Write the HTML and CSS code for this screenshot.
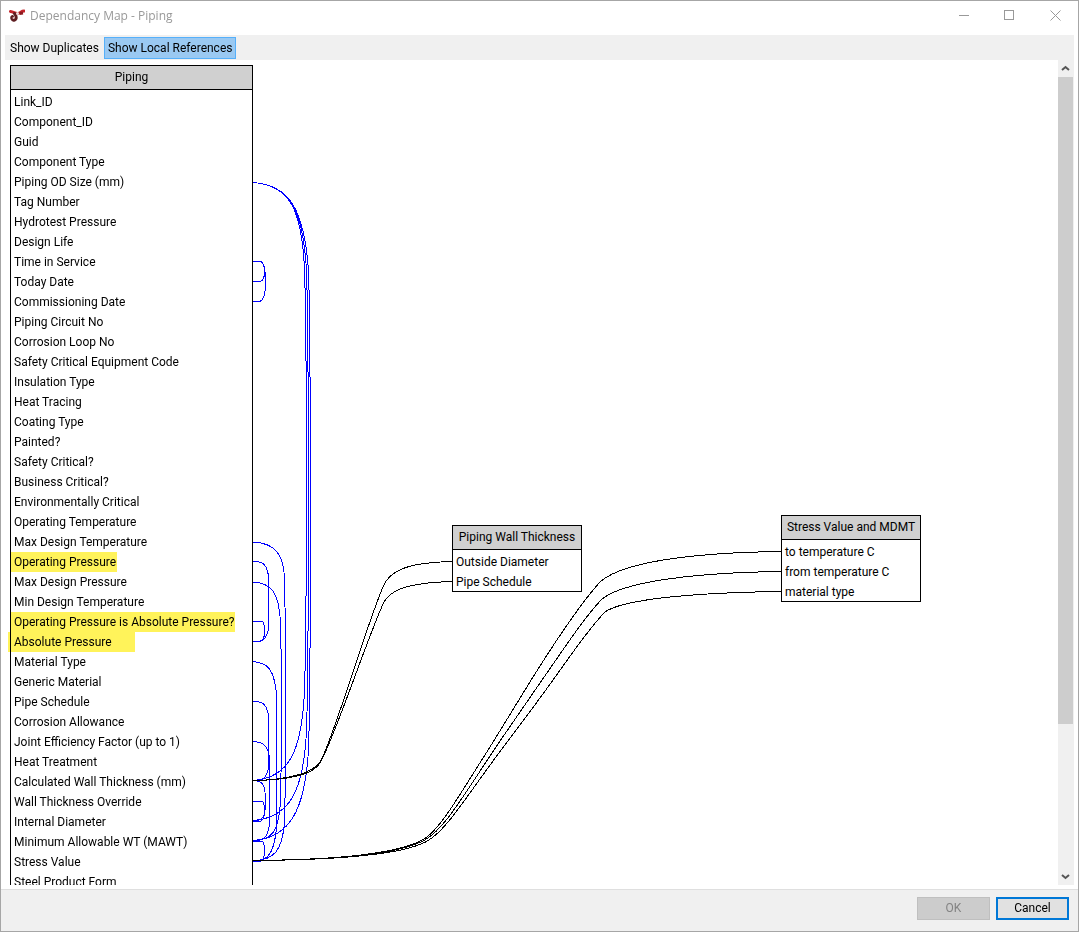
FILE: index.html
```
<!DOCTYPE html>
<html lang="en">
  <head>
    <meta charset="UTF-8" />
    <title>Dependancy Map - Piping</title>
    <link rel="stylesheet" href="styles.css">
  </head>

  <body>
    <div class="window">
      <header class="titlebar">
        <svg class="logo" width="16" height="14" viewBox="0 0 16 14">
          <path d="M1.500 2.500C5 3 6 5 9 4.500S12 2 15 2" fill="none" stroke="#c4242b" stroke-width="3" stroke-linecap="round" />
          <path d="M10.500 4.500L14 4" fill="none" stroke="#8d1a20" stroke-width="3" />
          <path d="M5.500 4.500C7.500 7 8 10 5.500 11S2 8.500 3.500 7.500" fill="none" stroke="#5e1d21" stroke-width="3" stroke-linecap="round" />
          <circle cx="8.500" cy="4.500" r="1.500" fill="#f0dada" />
          <circle cx="4.500" cy="9" r="1" fill="#e0b4b6" />
        </svg>
        <h1>Dependancy Map - Piping</h1>
        <div class="controls">
          <button type="button" aria-label="Minimize">
            <svg width="11" height="11" viewBox="0 0 11 11"><path d="M1 5.5H11" /></svg>
          </button>
          <button type="button" aria-label="Maximize">
            <svg width="11" height="11" viewBox="0 0 11 11"><path d="M.5 .5H9.5V9.5H.5Z" /></svg>
          </button>
          <button type="button" aria-label="Close">
            <svg class="smooth" width="11" height="11" viewBox="0 0 11 11"><path d="M.5 .5L10.5 10.5M10.5 .5L.5 10.5" /></svg>
          </button>
        </div>
      </header>

      <nav class="toolbar">
        <button type="button">Show Duplicates</button>
        <button type="button" class="active">Show Local References</button>
      </nav>

      <main class="view">
        <div class="canvas">
          <section class="node piping">
            <h2>Piping</h2>
            <ul>
              <li>Link_ID</li>
              <li>Component_ID</li>
              <li>Guid</li>
              <li>Component Type</li>
              <li>Piping OD Size (mm)</li>
              <li>Tag Number</li>
              <li>Hydrotest Pressure</li>
              <li>Design Life</li>
              <li>Time in Service</li>
              <li>Today Date</li>
              <li>Commissioning Date</li>
              <li>Piping Circuit No</li>
              <li>Corrosion Loop No</li>
              <li>Safety Critical Equipment Code</li>
              <li>Insulation Type</li>
              <li>Heat Tracing</li>
              <li>Coating Type</li>
              <li>Painted?</li>
              <li>Safety Critical?</li>
              <li>Business Critical?</li>
              <li>Environmentally Critical</li>
              <li>Operating Temperature</li>
              <li>Max Design Temperature</li>
              <li><mark>Operating Pressure</mark></li>
              <li>Max Design Pressure</li>
              <li>Min Design Temperature</li>
              <li><mark>Operating Pressure is Absolute Pressure?</mark></li>
              <li><mark class="wide">Absolute Pressure</mark></li>
              <li>Material Type</li>
              <li>Generic Material</li>
              <li>Pipe Schedule</li>
              <li>Corrosion Allowance</li>
              <li>Joint Efficiency Factor (up to 1)</li>
              <li>Heat Treatment</li>
              <li>Calculated Wall Thickness (mm)</li>
              <li>Wall Thickness Override</li>
              <li>Internal Diameter</li>
              <li>Minimum Allowable WT (MAWT)</li>
              <li>Stress Value</li>
              <li>Steel Product Form</li>
            </ul>
          </section>

          <section class="node thickness">
            <h2>Piping Wall Thickness</h2>
            <ul>
              <li>Outside Diameter</li>
              <li>Pipe Schedule</li>
            </ul>
          </section>

          <section class="node stress">
            <h2>Stress Value and MDMT</h2>
            <ul>
              <li>to temperature C</li>
              <li>from temperature C</li>
              <li>material type</li>
            </ul>
          </section>

          <svg class="links" width="1053" height="825" viewBox="5 60 1053 825">
            <!-- local references -->
            <g class="local">
              <path d="M253 182.500C290 185 302 210 304.500 270C307 340 307 620 304.500 690C302 750 290 778 253 780.500" />
              <path d="M253 182.500C290 185 303 210 306.500 270C309 350 309 660 306.500 730C304 790 290 818 253 820.500" />
              <path d="M253 182.500C290 185 304 210 308.500 270C311 350 311 680 308.500 750C305 810 290 838 253 840.500" />
              <path d="M253 261.500H260Q264.500 262 264.500 271.500Q264.500 281 260 281.500H253" />
              <path d="M253 261.500H260Q265.500 262 265.500 281.500Q265.500 301 259 301.500H253" />
              <path d="M253 542C275 543 284 554 284.500 580C286 650 286 760 284.500 823C282 850 275 860 253 861" />
              <path d="M253 561.500C263 561 267 565 268.500 576V628C267 639 263 642 253 641.500" />
              <path d="M253 582C272 583 279 593 280.500 622C282 680 282 740 280.500 800C279 832 272 840 253 841" />
              <path d="M253 621.500H262Q264.500 622 264.500 631.500Q264.500 641 260 641.500H253" />
              <path d="M253 661.500C268 663 274 669 276.500 694V828C274 854 268 861 253 861" />
              <path d="M253 701.500C263 701 267 705 268.500 716V767C267 778 263 781 253 780.500" />
              <path d="M253 741.500C263 742 268 745 269.500 758V824C268 838 263 841 253 840.500" />
              <path d="M253 780.500C262 781 265.500 783 265.500 801C265.500 819 262 821 253 820.500" />
              <path d="M253 801.500H262Q264.500 802 264.500 811.500Q264.500 820 260 821.500H253" />
              <path d="M253 841.500H262Q264.500 842 264.500 851.500Q264.500 860 260 861.500H253" />
            </g>
            <!-- references to other tables -->
            <g class="remote">
              <path d="M253 780.500C288 780 313 773 320 762C333 741 369 616 384 585C392 567 417 562.500 452 561.500" />
              <path d="M253 780.500C288 780 313 775 320 763C333 742 369 633 384 602C392 587 417 582.500 452 581.500" />
              <path d="M253 860.500C330 860 403 854 427 837C443 824 455 802 490 747L533 677C560 634 582 602 600 582C624 560 704 552.500 781 551.500" />
              <path d="M253 860.500C330 860 403 855 428 838C447 825 465 793 500 741L540 683C565 647 584 618 602 599C626 580 704 572.500 781 571.500" />
              <path d="M253 860.500C330 860 404 856 429 840C449 827 467 795 502 749L540 698C565 664 587 630 605 612C625 598 704 592.500 781 591.500" />
            </g>
          </svg>
        </div>

        <div class="scrollbar">
          <button type="button" aria-label="Scroll up">
            <svg width="9" height="7" viewBox="0 0 9 7"><path d="M1 5L4.500 2L8 5" /></svg>
          </button>
          <div class="track"><div class="thumb"></div></div>
          <button type="button" aria-label="Scroll down">
            <svg width="9" height="7" viewBox="0 0 9 7"><path d="M1 2L4.500 5L8 2" /></svg>
          </button>
        </div>
      </main>

      <footer class="footer">
        <button type="button" disabled>OK</button>
        <button type="button" class="default">Cancel</button>
      </footer>
    </div>
  </body>
</html>
```
FILE: styles.css
```
* {
  padding: 0;
  margin: 0;
  box-sizing: border-box;
}

body {
  font: 12px/20px Roboto, sans-serif;
  color: #000;
}

button {
  font: inherit;
  color: inherit;
  background: none;
  border: 0;
}

.window {
  display: flex;
  flex-direction: column;
  height: 100vh;
  border: 1px solid #a6a6a6;
  background-color: #fff;
}

/* title bar */
.titlebar {
  display: flex;
  align-items: center;
  height: 34px;
  padding-left: 8px;
}

.titlebar .logo {
  margin-bottom: 5px;
}

.titlebar h1 {
  flex: 1;
  margin: 0 0 4px 5px;
  font: 12px/20px "Open Sans", sans-serif;
  color: #999;
}

.controls {
  display: flex;
  align-self: flex-start;
}

.controls button {
  display: flex;
  align-items: center;
  justify-content: center;
  width: 46px;
  height: 28px;
}

.controls svg {
  fill: none;
  stroke: #999;
  shape-rendering: crispEdges;
}

.controls .smooth {
  shape-rendering: auto;
}

/* toolbar */
.toolbar {
  display: flex;
  align-items: center;
  height: 25px;
  margin: 0 4px;
  background-color: #f0f0f0;
}

.toolbar button {
  height: 22px;
  padding: 0 4px;
  border: 1px solid transparent;
  white-space: nowrap;
}

.toolbar .active {
  padding: 0 3px;
  border-color: #56b0fa;
  background-color: #9ac9f2;
}

/* map */
.view {
  display: flex;
  flex: 1;
  min-height: 0;
  margin: 0 4px 4px;
}

.canvas {
  position: relative;
  flex: 1;
  overflow: hidden;
}

.node {
  position: absolute;
  border: 1px solid #000;
  background-color: #fff;
  white-space: nowrap;
}

.node h2 {
  height: 24px;
  border-bottom: 1px solid #000;
  background-color: #d0d0d0;
  font-size: 12px;
  font-weight: normal;
  line-height: 23px;
  text-align: center;
}

.node ul {
  margin-bottom: -1px;
  padding: 2px 3px 0;
  list-style: none;
}

.node li {
  height: 20px;
}

.piping {
  left: 5px;
  top: 5px;
  width: 243px;
}

.thickness {
  left: 447px;
  top: 465px;
  width: 130px;
}

.stress {
  left: 776px;
  top: 455px;
  width: 140px;
}

mark {
  display: inline-block;
  height: 20px;
  margin-left: -3px;
  padding: 0 1px 0 3px;
  background-color: #fff35a;
  color: inherit;
  mix-blend-mode: multiply;
}

mark.wide {
  margin-left: -6px;
  padding: 0 23px 0 6px;
}

.links {
  position: absolute;
  left: 0;
  top: 0;
  fill: none;
  shape-rendering: crispEdges;
}

.local {
  stroke: #00f;
}

.remote {
  stroke: #000;
}

/* scroll bar */
.scrollbar {
  display: flex;
  flex-direction: column;
  width: 16px;
  background-color: #f0f0f0;
}

.scrollbar button {
  display: flex;
  align-items: center;
  justify-content: center;
  width: 15px;
  height: 17px;
}

.scrollbar svg {
  fill: none;
  stroke: #555;
  stroke-width: 2;
}

.track {
  flex: 1;
}

.thumb {
  width: 15px;
  height: calc(100% * 9 / 11);
  background-color: #cdcdcd;
}

/* footer */
.footer {
  display: flex;
  justify-content: flex-end;
  gap: 6px;
  height: 42px;
  padding: 7px 9px;
  border-top: 1px solid #dfdfdf;
  background-color: #f0f0f0;
}

.footer button {
  width: 73px;
  height: 23px;
  border: 1px solid #bfbfbf;
  background-color: #ccc;
  color: #838383;
  line-height: 19px;
}

.footer .default {
  border: 2px solid #0078d7;
  background-color: #e1e1e1;
  color: #000;
}
```
